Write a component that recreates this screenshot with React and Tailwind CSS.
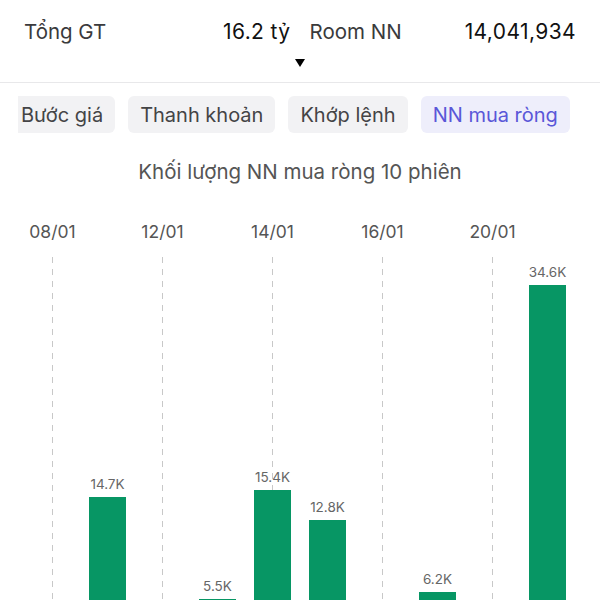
import React from "react";

const tabs = [
  { label: "Bước giá", active: false },
  { label: "Thanh khoản", active: false },
  { label: "Khớp lệnh", active: false },
  { label: "NN mua ròng", active: true },
];

// 10 sessions, height in px from the baseline (which sits below the fold)
const sessions = [
  { date: "08/01" },
  { value: "14.7K", h: 157 },
  { date: "12/01" },
  { value: "5.5K", h: 55 },
  { date: "14/01", value: "15.4K", h: 164 },
  { value: "12.8K", h: 134 },
  { date: "16/01" },
  { value: "6.2K", h: 62 },
  { date: "20/01" },
  { value: "34.6K", h: 369 },
];

const StatCell = ({ label, value }) => (
  <div className="flex h-10 items-center justify-between">
    <span className="text-[20.5px] text-[#3a3a3c]">{label}</span>
    <span className="text-[21px] tracking-[0.4px] text-[#111111]">{value}</span>
  </div>
);

export default function App() {
  return (
    <div
      className="w-[600px] bg-white"
      style={{ fontFamily: "Inter, 'Noto Sans', sans-serif" }}
    >
      <div className="grid grid-cols-2 gap-[19px] px-6 pt-3">
        <StatCell label="Tổng GT" value="16.2 tỷ" />
        <StatCell label="Room NN" value="14,041,934" />
      </div>

      <div className="mt-[7px] flex justify-center">
        <div className="h-0 w-0 border-x-[5px] border-t-[8px] border-x-transparent border-t-black" />
      </div>

      <div className="mt-[15px] h-px bg-[#e8e8ea]" />

      <div className="mt-[13px] pl-[18px]">
        <div className="flex gap-[13px] overflow-hidden">
          {tabs.map((t, i) => (
            <div
              key={t.label}
              className={`flex h-[37px] shrink-0 items-center rounded-md px-[12px] text-[20px] ${
                i === 0 ? "-ml-[9px]" : ""
              } ${
                t.active
                  ? "bg-[#eeeefb] text-[#5a57d8]"
                  : "bg-[#f2f2f4] text-[#444446]"
              }`}
            >
              {t.label}
            </div>
          ))}
        </div>
      </div>

      <div className="mt-[27px] text-center text-[20.5px] leading-6 text-[#555555]">
        Khối lượng NN mua ròng 10 phiên
      </div>

      <div className="ml-[25px] mt-[37px] grid w-[550px] grid-cols-10">
        {sessions.map((s, i) => (
          <div key={i} className="flex flex-col items-center">
            <div className="h-[22px] whitespace-nowrap text-[17.5px] leading-[22px] text-[#555555]">
              {s.date || ""}
            </div>
            <div className="relative mt-[14px] h-[397px] w-full">
              {s.date && (
                <div className="absolute inset-y-0 left-[27px] w-px bg-[linear-gradient(to_bottom,#c8c8c8_50%,transparent_50%)] bg-[length:1px_12px]" />
              )}
              {s.value && (
                <div className="relative flex h-full flex-col items-center justify-end">
                  <span className="mb-[5px] text-[13.5px] leading-4 text-[#666666]">
                    {s.value}
                  </span>
                  <div
                    className="w-[37px] bg-[#079664]"
                    style={{ height: s.h }}
                  />
                </div>
              )}
            </div>
          </div>
        ))}
      </div>
    </div>
  );
}
